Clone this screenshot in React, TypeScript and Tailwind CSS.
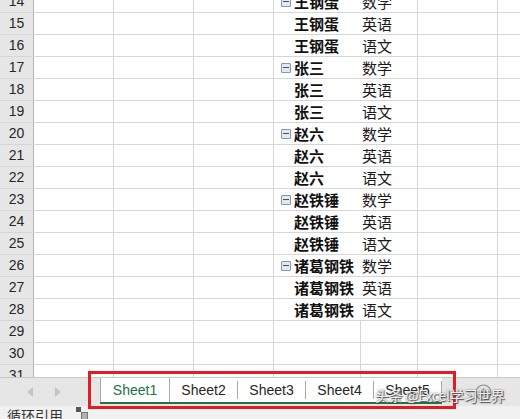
import React from "react";

// one row of the pivot area: [row number, show minus box, name, subject]
type Row = { n: number; group?: boolean; name?: string; subject?: string };

const rows: Row[] = [
  { n: 14, group: true, name: "王钢蛋", subject: "数学" },
  { n: 15, name: "王钢蛋", subject: "英语" },
  { n: 16, name: "王钢蛋", subject: "语文" },
  { n: 17, group: true, name: "张三", subject: "数学" },
  { n: 18, name: "张三", subject: "英语" },
  { n: 19, name: "张三", subject: "语文" },
  { n: 20, group: true, name: "赵六", subject: "数学" },
  { n: 21, name: "赵六", subject: "英语" },
  { n: 22, name: "赵六", subject: "语文" },
  { n: 23, group: true, name: "赵铁锤", subject: "数学" },
  { n: 24, name: "赵铁锤", subject: "英语" },
  { n: 25, name: "赵铁锤", subject: "语文" },
  { n: 26, group: true, name: "诸葛钢铁", subject: "数学" },
  { n: 27, name: "诸葛钢铁", subject: "英语" },
  { n: 28, name: "诸葛钢铁", subject: "语文" },
  { n: 29 },
  { n: 30 },
  { n: 31 },
];

const tabs = ["Sheet1", "Sheet2", "Sheet3", "Sheet4", "Sheet5"];

function MinusBox() {
  return (
    <span className="w-[10px] h-[10px] border border-[#8896aa] bg-[#e4e8ee] rounded-[1px] flex items-center justify-center shrink-0">
      <span className="w-[6px] h-[1px] bg-[#4b5566]" />
    </span>
  );
}

function SheetRow({ row }: { row: Row }) {
  const pivot = !!row.name;
  return (
    <div className="flex h-[22px] border-b border-[#d6d6d6]">
      <div className="w-[34px] shrink-0 bg-[#e6e6e6] border-r border-[#b4b4b4] flex items-center justify-center text-[14px] text-[#262626] [font-family:'Liberation_Sans',Arial,sans-serif]">
        {row.n}
      </div>
      <div className="w-[80px] shrink-0 border-r border-[#d6d6d6]" />
      <div className="w-[80px] shrink-0 border-r border-[#d6d6d6]" />
      <div className="w-[80px] shrink-0 border-r border-[#d6d6d6]" />
      <div
        className={
          pivot
            ? "w-[87px] shrink-0 border-r border-white flex items-center pl-[7px]"
            : "w-[87px] shrink-0 border-r border-[#d6d6d6]"
        }
      >
        {pivot && (
          <>
            <span className="w-[13px] shrink-0 flex items-center">{row.group && <MinusBox />}</span>
            <span className="font-bold text-[15px] text-[#111] whitespace-nowrap leading-none">{row.name}</span>
          </>
        )}
      </div>
      <div className="w-[57px] shrink-0 border-r border-[#d6d6d6] flex items-center pl-[1px]">
        {pivot && <span className="text-[15px] text-[#1a1a1a] whitespace-nowrap leading-none">{row.subject}</span>}
      </div>
      <div className="w-[80px] shrink-0 border-r border-[#d6d6d6]" />
      <div className="flex-1" />
    </div>
  );
}

export default function App() {
  return (
    <div className="w-[520px] h-[419px] overflow-hidden relative bg-white [font-family:'Noto_Sans_CJK_SC','Liberation_Sans',sans-serif]">
      {/* grid */}
      <div className="h-[377px] overflow-hidden">
        <div className="-mt-[9px]">
          {rows.map((r) => (
            <SheetRow key={r.n} row={r} />
          ))}
        </div>
      </div>

      {/* sheet tabs */}
      <div className="h-[29px] flex bg-[#e6e6e6] border-t border-[#c8c8c8]">
        <div className="w-[100px] shrink-0 flex items-center">
          <span className="ml-[27px] w-0 h-0 border-y-[5px] border-y-transparent border-r-[6px] border-r-[#c4c4c4]" />
          <span className="ml-[22px] w-0 h-0 border-y-[5px] border-y-transparent border-l-[6px] border-l-[#c4c4c4]" />
        </div>
        <div className="flex bg-white border-b-2 border-[#217346] h-[26px] [font-family:'Liberation_Sans',Arial,sans-serif]">
          {tabs.map((t, i) => (
            <div
              key={t}
              className={
                i === 0
                  ? "w-[70px] flex items-center justify-center text-[14px] text-[#217346] border-l border-[#a8a8a8] border-r border-r-[#a8a8a8]"
                  : "w-[68px] flex items-center justify-center text-[14px] text-[#262626] border-r border-[#a8a8a8] my-[3px]"
              }
            >
              {t}
            </div>
          ))}
        </div>
        <div className="flex-1 flex items-center pl-[33px]">
          <svg width="17" height="17" viewBox="0 0 17 17">
            <circle cx="8.5" cy="8.5" r="7.5" fill="none" stroke="#8c8c8c" strokeWidth="1.2" />
            <path d="M8.5 4.5v8M4.5 8.5h8" stroke="#6e6e6e" strokeWidth="1.4" />
          </svg>
        </div>
      </div>

      {/* status bar */}
      <div className="h-[13px] bg-[#f1f1f1] flex items-start overflow-visible">
        <span className="ml-[7px] text-[14px] leading-[18px] text-[#333]">循环引用</span>
        <svg className="ml-[12px] mt-[1px]" width="14" height="13" viewBox="0 0 14 13">
          <rect x="1" y="0" width="5" height="5" fill="#555" />
          <rect x="6" y="5" width="7" height="8" fill="#777" />
          <path d="M7 7h5M7 9h5M7 11h5" stroke="#eee" strokeWidth="1" />
        </svg>
      </div>

      {/* red annotation box */}
      <div className="absolute left-[88px] top-[371px] w-[368px] h-[38px] border-[3px] border-[#e31b23]" />

      {/* watermark */}
      <div className="absolute left-[375px] top-[385px] text-[14px] leading-[20px] tracking-[-0.3px] text-white/90 whitespace-nowrap [text-shadow:0_0_2px_#555,1px_1px_1px_#444]">
        头条 @Excel学习世界
      </div>
    </div>
  );
}
